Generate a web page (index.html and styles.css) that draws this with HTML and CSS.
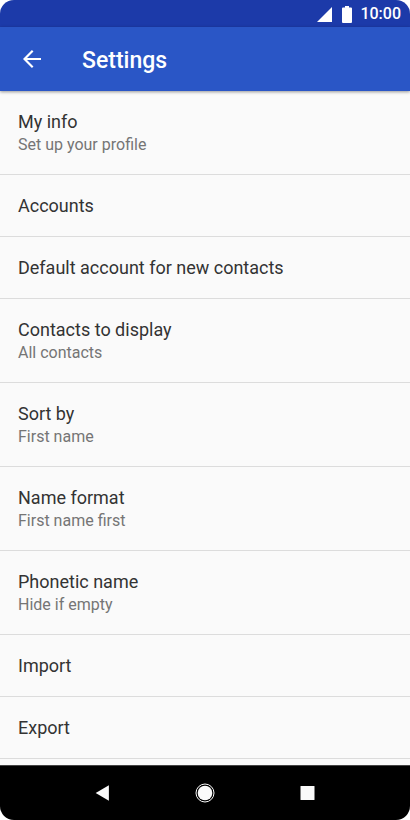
FILE: index.html
```html
<!DOCTYPE html>
<html lang="en">
<head>
<meta charset="utf-8">
<meta name="viewport" content="width=device-width, initial-scale=1">
<title>Settings</title>
<link rel="stylesheet" href="styles.css">
</head>
<body>
<div class="phone">
  <div class="status">
    <svg class="signal" viewBox="0 0 15 15" aria-hidden="true"><path d="M15 0V15H0Z"/></svg>
    <svg class="battery" viewBox="0 0 10 17" aria-hidden="true"><path d="M3 0h4v1.500h2q1 0 1 1v13.500q0 1-1 1H1q-1 0-1-1V2.500q0-1 1-1h2z"/></svg>
    <time>10:00</time>
  </div>
  <header class="appbar">
    <button class="back" type="button" aria-label="Back">
      <svg viewBox="0 0 18 18" aria-hidden="true"><path d="M18 9H1.5M9.7 .8L1.5 9l8.2 8.2"/></svg>
    </button>
    <h1>Settings</h1>
  </header>
  <main>
    <ul class="list">
      <li><a class="row" href="#my-info"><span class="name">My info</span><span class="detail">Set up your profile</span></a></li>
      <li><a class="row" href="#accounts"><span class="name">Accounts</span></a></li>
      <li><a class="row" href="#default-account"><span class="name">Default account for new contacts</span></a></li>
      <li><a class="row" href="#display"><span class="name">Contacts to display</span><span class="detail">All contacts</span></a></li>
      <li><a class="row" href="#sort"><span class="name">Sort by</span><span class="detail">First name</span></a></li>
      <li><a class="row" href="#format"><span class="name">Name format</span><span class="detail">First name first</span></a></li>
      <li><a class="row" href="#phonetic"><span class="name">Phonetic name</span><span class="detail">Hide if empty</span></a></li>
      <li><a class="row" href="#import"><span class="name">Import</span></a></li>
      <li><a class="row" href="#export"><span class="name">Export</span></a></li>
    </ul>
  </main>
  <nav class="navbar" aria-label="System">
    <button type="button" aria-label="Back"><svg viewBox="0 0 20 20" aria-hidden="true"><path d="M2.700 10L15.900 2.300V17.700Z"/></svg></button>
    <button type="button" aria-label="Home"><svg viewBox="0 0 20 20" aria-hidden="true"><circle cx="10" cy="10" r="7.300"/><circle class="ring" cx="10" cy="10" r="9"/></svg></button>
    <button type="button" aria-label="Recent apps"><svg viewBox="0 0 20 20" aria-hidden="true"><rect x="3.500" y="3" width="14" height="14" rx=".5"/></svg></button>
  </nav>
</div>
</body>
</html>
```
FILE: styles.css
```css
* {
  box-sizing: border-box;
}

body {
  margin: 0;
  background: #fff;
  font-family: Roboto, "Liberation Sans", sans-serif;
}

.phone {
  display: flex;
  flex-direction: column;
  min-height: 100vh;
  border-radius: 14px;
  overflow: hidden;
  background: #fafafa;
}

.status {
  display: flex;
  align-items: center;
  justify-content: flex-end;
  height: 27px;
  padding: 1px 9px 0;
  background: #1c3aa9;
  color: #fff;
  font-size: 16px;
  font-weight: 500;
  line-height: 20px;
}

.status svg {
  fill: #fff;
}

.signal {
  width: 15px;
  height: 15px;
  margin-right: 10px;
}

.battery {
  width: 10px;
  height: 17px;
  margin-right: 8px;
}

.appbar {
  display: flex;
  align-items: center;
  height: 64px;
  padding: 0 18px;
  background: #2a56c6;
  color: #fff;
  box-shadow: 0 1px 3px rgba(0, 0, 0, 0.4);
}

.appbar h1 {
  margin: 4px 0 0 36px;
  font-size: 23px;
  font-weight: 500;
  line-height: 28px;
}

button {
  display: flex;
  align-items: center;
  justify-content: center;
  padding: 0;
  border: 0;
  background: none;
}

.back {
  width: 28px;
  height: 28px;
}

.back svg {
  width: 18px;
  height: 18px;
  fill: none;
  stroke: #fff;
  stroke-width: 2.2;
}

main {
  flex: 1;
}

.list {
  margin: 0;
  padding: 0;
  list-style: none;
}

.row {
  display: flex;
  flex-direction: column;
  padding: 19px 18px 18px;
  border-bottom: 1px solid #dcdcdc;
  color: #333;
  text-decoration: none;
}

.name {
  font-size: 18px;
  line-height: 24px;
}

.detail {
  color: #757575;
  font-size: 16px;
  line-height: 22px;
}

.navbar {
  display: flex;
  justify-content: center;
  gap: 74px;
  height: 55px;
  border-top: 1px solid #444;
  background: #000;
}

.navbar button {
  width: 28px;
}

.navbar svg {
  width: 20px;
  height: 20px;
  fill: #fafafa;
}

.navbar .ring {
  fill: none;
  stroke: #fafafa;
  stroke-width: 1;
}
```
